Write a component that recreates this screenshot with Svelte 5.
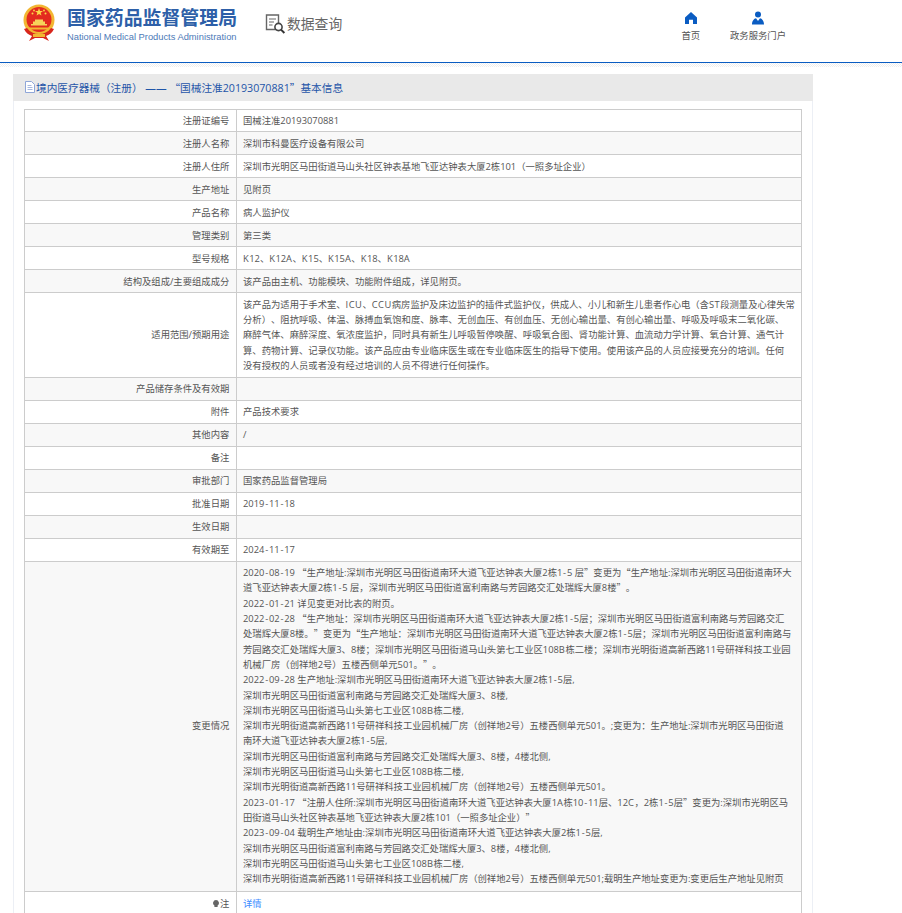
<script>
	const rows = [
		{ label: '注册证编号', lines: ['国械注准20193070881'] },
		{ label: '注册人名称', lines: ['深圳市科曼医疗设备有限公司'] },
		{ label: '注册人住所', lines: ['深圳市光明区马田街道马山头社区钟表基地飞亚达钟表大厦2栋101（一照多址企业）'] },
		{ label: '生产地址', lines: ['见附页'] },
		{ label: '产品名称', lines: ['病人监护仪'] },
		{ label: '管理类别', lines: ['第三类'] },
		{ label: '型号规格', lines: ['K12、K12A、K15、K15A、K18、K18A'] },
		{ label: '结构及组成/主要组成成分', lines: ['该产品由主机、功能模块、功能附件组成，详见附页。'] },
		{
			label: '适用范围/预期用途',
			lines: [
				'该产品为适用于手术室、ICU、CCU病房监护及床边监护的插件式监护仪，供成人、小儿和新生儿患者作心电（含ST段测量及心律失常',
				'分析）、阻抗呼吸、体温、脉搏血氧饱和度、脉率、无创血压、有创血压、无创心输出量、有创心输出量、呼吸及呼吸末二氧化碳、',
				'麻醉气体、麻醉深度、氧浓度监护，同时具有新生儿呼吸暂停唤醒、呼吸氧合图、肾功能计算、血流动力学计算、氧合计算、通气计',
				'算、药物计算、记录仪功能。该产品应由专业临床医生或在专业临床医生的指导下使用。使用该产品的人员应接受充分的培训。任何',
				'没有授权的人员或者没有经过培训的人员不得进行任何操作。'
			]
		},
		{ label: '产品储存条件及有效期', lines: [''] },
		{ label: '附件', lines: ['产品技术要求'] },
		{ label: '其他内容', lines: ['/'] },
		{ label: '备注', lines: [''] },
		{ label: '审批部门', lines: ['国家药品监督管理局'] },
		{ label: '批准日期', lines: ['2019-11-18'] },
		{ label: '生效日期', lines: [''] },
		{ label: '有效期至', lines: ['2024-11-17'] },
		{
			label: '变更情况',
			lines: [
				'2020-08-19 “生产地址:深圳市光明区马田街道南环大道飞亚达钟表大厦2栋1-5 层”变更为“生产地址:深圳市光明区马田街道南环大',
				'道飞亚达钟表大厦2栋1-5 层，深圳市光明区马田街道富利南路与芳园路交汇处瑞辉大厦8楼”。',
				'2022-01-21 详见变更对比表的附页。',
				'2022-02-28 “生产地址：深圳市光明区马田街道南环大道飞亚达钟表大厦2栋1-5层；深圳市光明区马田街道富利南路与芳园路交汇',
				'处瑞辉大厦8楼。”变更为“生产地址：深圳市光明区马田街道南环大道飞亚达钟表大厦2栋1-5层；深圳市光明区马田街道富利南路与',
				'芳园路交汇处瑞辉大厦3、8楼；深圳市光明区马田街道马山头第七工业区108B栋二楼；深圳市光明街道高新西路11号研祥科技工业园',
				'机械厂房（创祥地2号）五楼西侧单元501。”。',
				'2022-09-28 生产地址:深圳市光明区马田街道南环大道飞亚达钟表大厦2栋1-5层,',
				'深圳市光明区马田街道富利南路与芳园路交汇处瑞辉大厦3、8楼,',
				'深圳市光明区马田街道马山头第七工业区108B栋二楼,',
				'深圳市光明街道高新西路11号研祥科技工业园机械厂房（创祥地2号）五楼西侧单元501。;变更为：生产地址:深圳市光明区马田街道',
				'南环大道飞亚达钟表大厦2栋1-5层,',
				'深圳市光明区马田街道富利南路与芳园路交汇处瑞辉大厦3、8楼，4楼北侧,',
				'深圳市光明区马田街道马山头第七工业区108B栋二楼,',
				'深圳市光明街道高新西路11号研祥科技工业园机械厂房（创祥地2号）五楼西侧单元501。',
				'2023-01-17 “注册人住所:深圳市光明区马田街道南环大道飞亚达钟表大厦1A栋10-11层、12C，2栋1-5层”变更为:深圳市光明区马',
				'田街道马山头社区钟表基地飞亚达钟表大厦2栋101（一照多址企业）”',
				'2023-09-04 载明生产地址由:深圳市光明区马田街道南环大道飞亚达钟表大厦2栋1-5层,',
				'深圳市光明区马田街道富利南路与芳园路交汇处瑞辉大厦3、8楼，4楼北侧,',
				'深圳市光明区马田街道马山头第七工业区108B栋二楼,',
				'深圳市光明街道高新西路11号研祥科技工业园机械厂房（创祥地2号）五楼西侧单元501;载明生产地址变更为:变更后生产地址见附页'
			]
		}
	];

	// quotes need the CJK face, hyphens and capitals run a little wider than Open Sans
	function tokens(line) {
		return line.split(/([“”]|-|[A-Z]+)/).filter(Boolean).map((text) => ({
			text,
			kind: /[“”]/.test(text) ? 'quote' : text === '-' ? 'hyphen' : /^[A-Z]+$/.test(text) ? 'caps' : ''
		}));
	}
</script>

<header class="top">
	<div class="brand">
		<svg class="emblem" viewBox="0 0 36 38" width="36" height="38">
			<circle cx="18" cy="16" r="15.5" fill="#f2b632" />
			<circle cx="18" cy="15.5" r="12.5" fill="#e32a1f" />
			<polygon points="18,4 19,7 22,7 19.6,8.8 20.5,11.6 18,10 15.5,11.6 16.4,8.8 14,7 17,7" fill="#fbd84a" />
			<circle cx="11.5" cy="9.5" r="1" fill="#fbd84a" />
			<circle cx="24.5" cy="9.5" r="1" fill="#fbd84a" />
			<circle cx="13" cy="6.5" r="0.9" fill="#fbd84a" />
			<circle cx="23" cy="6.5" r="0.9" fill="#fbd84a" />
			<path d="M10 20h16v1.6H10zM12 17.5h12V20H12zM14 15.5h8v2h-8z" fill="#f7d35a" />
			<path d="M8 23.500h20v2H8z" fill="#f2b632" />
			<path d="M3 25c2 4 5 6 8 7l-3 5 6-3h8l6 3-3-5c3-1 6-3 8-7l-3-1c-3 4-7 6-12 6s-9-2-12-6z" fill="#d8261c" />
			<path d="M12 30h12v3H12z" fill="#f2b632" />
		</svg>
		<div class="brand-text">
			<div class="cn-name">国家药品监督管理局</div>
			<div class="en-name">National Medical Products Administration</div>
		</div>
		<div class="query">
			<svg viewBox="0 0 22 22" width="22" height="22">
				<path d="M1.500 2h12v14.500h-12z" fill="none" stroke="#666" stroke-width="1.4" />
				<path d="M4 6h7M4 9h5M4 12h3.500" stroke="#666" stroke-width="1.2" />
				<circle cx="13.500" cy="14" r="3.600" fill="#fff" stroke="#444" stroke-width="1.6" />
				<path d="M16 16.600l3.400 3.400" stroke="#333" stroke-width="2" />
			</svg>
			<span>数据查询</span>
		</div>
	</div>
	<nav class="links">
		<a class="home" href="#home">
			<svg viewBox="0 0 14 14" width="14" height="14">
				<path d="M7 1L1 6.500V13h4V8.800h4V13h4V6.500z" fill="#0a5cc2" />
			</svg>
			<span>首页</span>
		</a>
		<a class="portal" href="#portal">
			<svg viewBox="0 0 14 14" width="14" height="14">
				<circle cx="7" cy="3.600" r="3" fill="#0a5cc2" />
				<path d="M1 13.500c0-3.600 2-6 4-6.300L7 10l2-2.800c2 .3 4 2.700 4 6.300z" fill="#0a5cc2" />
			</svg>
			<span>政务服务门户</span>
		</a>
	</nav>
</header>
<div class="dither"></div>

<main class="panel" lang="zh-CN">
	<h2 class="title">
		<svg viewBox="0 0 10 12" width="10" height="12">
			<path d="M.5.5h6l3 3v8h-9z" fill="#fff" stroke="#8fa6d8" />
			<path d="M2.500 4.500h4M2.500 6.500h5M2.500 8.500h5" stroke="#8fa6d8" stroke-width="0.8" />
		</svg>
		<span>境内医疗器械（注册） —— <span class="quote">“</span>国械注准20193070881<span class="quote">”</span>基本信息</span>
	</h2>
	<table>
		<tbody>
			{#each rows as row}
				<tr>
					<td class="label">{row.label}</td>
					<td class="value">
						{#each row.lines as line}
							<div>{#each tokens(line) as t}{#if t.kind}<span class={t.kind}>{t.text}</span>{:else}{t.text}{/if}{/each}</div>
						{/each}
					</td>
				</tr>
			{/each}
			<tr>
				<td class="label">
					<svg class="bulb" viewBox="0 0 6 8" width="6" height="8">
						<path d="M3 0a3 3 0 0 1 1.600 5.500V7H1.400V5.500A3 3 0 0 1 3 0z" fill="#666" />
					</svg>注
				</td>
				<td class="value"><a href="#detail">详情</a></td>
			</tr>
		</tbody>
	</table>
</main>

<style>
	:global(body) {
		margin: 0;
		background: #fff;
		overflow: hidden;
		font-family: "Open Sans", "Noto Sans CJK SC", sans-serif;
		color: #555;
		text-spacing-trim: space-all;
	}

	.top {
		display: flex;
		justify-content: space-between;
		height: 62px;
		border-bottom: 1.5px solid #0a5cc2;
		box-sizing: content-box;
	}

	.brand {
		display: flex;
		align-items: flex-start;
		padding: 4px 0 0 21px;
	}

	.emblem {
		flex: none;
	}

	.brand-text {
		margin-left: 10px;
		width: 172px;
	}

	.cn-name {
		margin-top: 2px;
		font-size: 18.9px;
		line-height: 24px;
		font-weight: 700;
		color: #2d5fa8;
		white-space: nowrap;
	}

	.en-name {
		font-family: "Liberation Sans", sans-serif;
		font-size: 9.34px;
		line-height: 12px;
		margin-top: 1px;
		color: #4d7ab8;
		white-space: nowrap;
	}

	.query {
		display: flex;
		align-items: center;
		margin: 9px 0 0 26px;
		color: #666;
		font-size: 13.8px;
		line-height: 22px;
	}

	.links {
		display: flex;
		padding: 11px 116px 0 0;
		gap: 30px;
	}

	.links a {
		display: flex;
		flex-direction: column;
		align-items: center;
		gap: 4px;
		font-size: 9.33px;
		line-height: 13px;
		color: #555;
		text-decoration: none;
	}

	.dither {
		height: 4px;
		background: repeating-conic-gradient(#eee 0 25%, #fff 0 50%) 0 0 / 2px 2px;
	}

	.panel {
		margin: 6.5px 0 0 13px;
		width: 798px;
		border: 1px solid #eceff5;
		border-top: 0;
	}

	.title {
		display: flex;
		align-items: center;
		gap: 1px;
		height: 27px;
		margin: 0 -1px;
		padding-left: 12px;
		background: #e9e9e9;
		color: #1f55a8;
		font-size: 10.67px;
		font-weight: 400;
	}

	table {
		table-layout: fixed;
		border-collapse: collapse;
		width: 778px;
		margin: 8px 0 0 10px;
		font-size: 9.33px;
		line-height: 15.33px;
	}

	td {
		border: 1px solid #ccc;
		padding: 3.33px 6.67px;
	}

	tr:nth-child(even) td {
		background: #f8f8f8;
	}

	tr:nth-last-child(2) td {
		padding-bottom: 4.6px;
	}

	.label {
		box-sizing: border-box;
		width: 212px;
		text-align: right;
		white-space: nowrap;
	}

	.value {
		padding-left: 6px;
	}

	.value div {
		min-height: 15.33px;
		white-space: nowrap;
	}

	.quote {
		font-family: "Noto Sans CJK SC", sans-serif;
	}

	.hyphen {
		padding: 0 0.8px;
	}

	.caps {
		letter-spacing: 0.5px;
	}

	.bulb {
		margin-right: 1px;
		vertical-align: -1px;
	}

	.value a {
		color: #3d8bff;
		text-decoration: none;
	}
</style>
